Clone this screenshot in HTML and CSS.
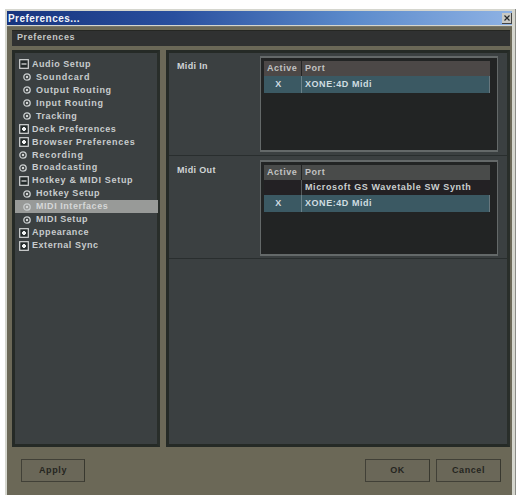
FILE: index.html
```html
<!DOCTYPE html>
<html lang="en">
<head>
<meta charset="utf-8">
<title>Preferences</title>
<link rel="stylesheet" href="styles.css">
</head>
<body>
<svg class="defs" width="0" height="0" aria-hidden="true">
  <symbol id="minus" viewBox="0 0 10 10"><rect x=".7" y=".7" width="8.6" height="8.6" fill="#222929" stroke="#d5d8d8" stroke-width="1.2"/><path d="M2.5 5h5" stroke="#d5d8d8" stroke-width="1.3"/></symbol>
  <symbol id="plus" viewBox="0 0 10 10"><rect x=".7" y=".7" width="8.6" height="8.6" fill="#222929" stroke="#d5d8d8" stroke-width="1.2"/><path d="M3 5h4M5 3v4" stroke="#eef0f0" stroke-width="2.2"/></symbol>
  <symbol id="dot" viewBox="0 0 8 8"><circle cx="4" cy="4" r="3.2" fill="none" stroke="#c9cdce" stroke-width="1.3"/><circle cx="4" cy="4" r="1.2" fill="#d5d8d8"/></symbol>
</svg>
<div class="window">
  <div class="titlebar"><span class="title">Preferences...</span>
    <span class="close"><svg width="6" height="6" viewBox="0 0 6 6"><path d="M.5.5l5 5M5.5.5l-5 5" stroke="#25282c" stroke-width="1.2"/></svg></span>
  </div>
  <div class="body">
    <div class="heading"><span>Preferences</span></div>
    <div class="panels">
      <ul class="tree">
        <li><svg class="box"><use href="#minus"/></svg><span>Audio Setup</span></li>
        <li class="child"><svg class="ring"><use href="#dot"/></svg><span class="wide">Soundcard</span></li>
        <li class="child"><svg class="ring"><use href="#dot"/></svg><span class="routing">Output Routing</span></li>
        <li class="child"><svg class="ring"><use href="#dot"/></svg><span class="routing">Input Routing</span></li>
        <li class="child"><svg class="ring"><use href="#dot"/></svg><span>Tracking</span></li>
        <li><svg class="box"><use href="#plus"/></svg><span>Deck Preferences</span></li>
        <li><svg class="box"><use href="#plus"/></svg><span class="routing">Browser Preferences</span></li>
        <li class="leaf"><svg class="ring"><use href="#dot"/></svg><span class="wide">Recording</span></li>
        <li class="leaf"><svg class="ring"><use href="#dot"/></svg><span class="routing">Broadcasting</span></li>
        <li><svg class="box"><use href="#minus"/></svg><span class="routing">Hotkey &amp; MIDI Setup</span></li>
        <li class="child"><svg class="ring"><use href="#dot"/></svg><span>Hotkey Setup</span></li>
        <li class="child selected"><svg class="ring"><use href="#dot"/></svg><span>MIDI Interfaces</span></li>
        <li class="child"><svg class="ring"><use href="#dot"/></svg><span>MIDI Setup</span></li>
        <li><svg class="box"><use href="#plus"/></svg><span>Appearance</span></li>
        <li><svg class="box"><use href="#plus"/></svg><span>External Sync</span></li>
      </ul>
      <div class="details">
        <section>
          <h2>Midi In</h2>
          <div class="list">
            <div class="row head warm"><b>Active</b><b>Port</b></div>
            <div class="row on"><b>X</b><b>XONE:4D Midi</b></div>
          </div>
        </section>
        <section>
          <h2>Midi Out</h2>
          <div class="list">
            <div class="row head"><b>Active</b><b>Port</b></div>
            <div class="row"><b></b><b class="synth">Microsoft GS Wavetable SW Synth</b></div>
            <div class="row on"><b>X</b><b>XONE:4D Midi</b></div>
          </div>
        </section>
      </div>
    </div>
    <div class="footer">
      <button class="apply">Apply</button><button>OK</button><button>Cancel</button>
    </div>
  </div>
</div>
</body>
</html>
```

FILE: styles.css
```css
* { box-sizing: border-box; }
body {
  margin: 0;
  width: 517px;
  height: 495px;
  padding: 9px 1px 0 5px;
  overflow: hidden;
  background: #fff;
  font: bold 9px/13px "Liberation Sans", Arial, sans-serif;
  letter-spacing: .55px;
  white-space: nowrap;
}
.defs { position: absolute; }
.window {
  height: 486px;
  padding: 2px 3px 0 2px;
  background: #d5d6ce;
  border-right: 1px solid #8a8b86;
}
.titlebar {
  height: 14px;
  display: flex;
  align-items: center;
  justify-content: space-between;
  padding: 0 0 0 1px;
  background: linear-gradient(90deg, #17347e 0%, #294f9e 33%, #5b8acb 68%, #8eb2e4 100%);
}
.title { color: #f2f5fa; font-size: 10px; letter-spacing: .45px; }
.close {
  width: 10px;
  height: 11px;
  display: grid;
  place-items: center;
  background: #c9c9c4;
  border-right: 1px solid #444;
  border-bottom: 1px solid #444;
}
.body {
  height: 470px;
  margin-top: 1px;
  padding: 3px 2px 0 5px;
  background: #6b6857;
  border-top: 1px solid #77766a;
}
.heading {
  height: 16px;
  padding: 0 5px;
  color: #c5c7c5;
  background: #303131;
  border-top: 1px solid #252622;
  letter-spacing: .6px;
}
.panels {
  height: 397px;
  margin-top: 4px;
  display: grid;
  grid-template-columns: 148px 344px;
  gap: 6px;
}
.tree, .details {
  margin: 0;
  background: #3b4041;
  border: 3px solid #252a26;
  border-right-color: #292e2a;
}
.tree { padding: 5px 0; list-style: none; color: #c8cccd; }
.tree li {
  height: 12.95px;
  display: flex;
  align-items: center;
  gap: 3px;
  padding-left: 4px;
}
.tree .child { padding-left: 8px; gap: 5px; }
.tree .leaf { gap: 5px; }
.tree .selected { margin-right: -1px; background: #989a98; color: #d5d7d7; }
.box { width: 10px; height: 10px; flex: none; }
.ring { width: 8px; height: 8px; flex: none; }
.routing { letter-spacing: .7px; }
.wide { letter-spacing: .8px; }
.details section {
  height: 103px;
  padding: 4px 8px 0 8px;
  display: grid;
  grid-template-columns: 83px 238px;
  border-bottom: 1px solid #292e2e;
}
.details section:first-child { padding-top: 3px; }
h2 {
  margin: 4px 0 0;
  color: #d1d5d6;
  font-size: 9px;
  line-height: 13px;
  letter-spacing: .35px;
}
.list {
  height: 96px;
  padding: 3px 7px 0 3px;
  color: #cbd0d0;
  background: #222424;
  border: 1px solid #646969;
  border-top-width: 2px;
  border-bottom-width: 2px;
}
.row {
  height: 15px;
  display: grid;
  grid-template-columns: 38px 1fr;
  align-items: center;
  background: #232124;
}
.row b { height: 100%; line-height: 15px; padding-left: 3px; }
.row b:first-child { border-right: 1px solid #555a5b; }
.head { background: #494b4a; color: #c2c2c2; }
.warm { background: #4c4847; }
.row.head b:first-child { border-color: #242525; }
.on { height: 17px; background: #3b5963; border-right: 1px solid #68777d; color: #d0dde1; }
.row.on b:first-child { padding: 0 8px 0 0; text-align: center; border-color: #6a8088; }
.on b { line-height: 16px; }
.row b.synth { letter-spacing: .62px; }
.footer {
  display: flex;
  gap: 6px;
  padding: 12px 0 0 9px;
}
button {
  width: 65px;
  height: 23px;
  padding: 0;
  color: #25251f;
  font: inherit;
  letter-spacing: .6px;
  background: #6a6758;
  border: 1px solid #414037;
  border-right-color: #38382f;
}
.apply { width: 64px; margin-right: 274px; }
```
